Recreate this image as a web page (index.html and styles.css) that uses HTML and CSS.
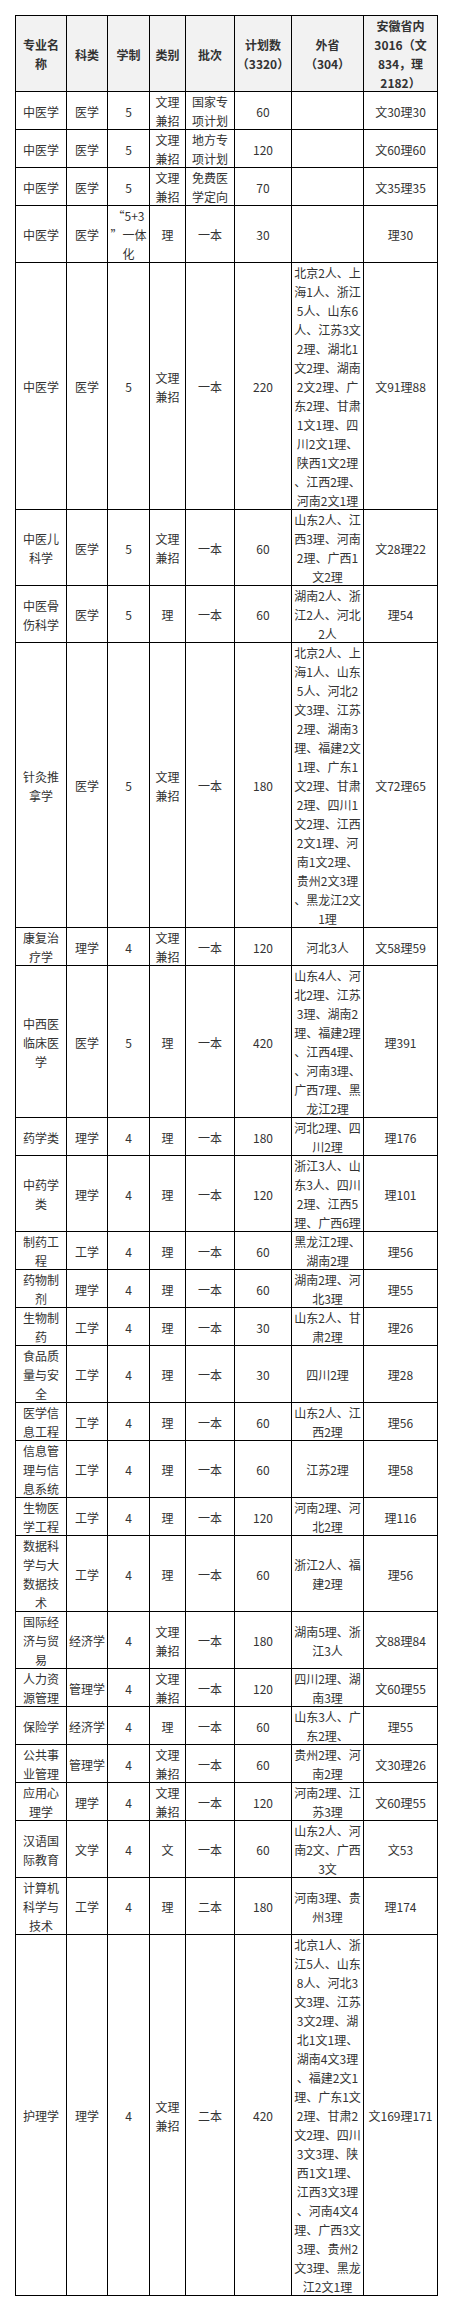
FILE: index.html
```html
<!DOCTYPE html>
<html lang="zh-CN">
<head>
<meta charset="utf-8">
<title>招生计划</title>
<link rel="stylesheet" href="styles.css">
</head>
<body>
<table class="plan">
<colgroup>
<col class="c1"><col class="c2"><col class="c3"><col class="c4"><col class="c5"><col class="c6"><col class="c7"><col class="c8">
</colgroup>
<thead>
<tr class="head">
<th>专业名<br>称</th><th>科类</th><th>学制</th><th>类别</th><th>批次</th><th>计划数<br>（3320）</th><th>外省<br>（304）</th><th>安徽省内<br>3016（文<br>834，理<br>2182）</th>
</tr>
</thead>
<tbody>
<tr><td>中医学</td><td>医学</td><td>5</td><td>文理<br>兼招</td><td>国家专<br>项计划</td><td>60</td><td></td><td>文30理30</td></tr>
<tr><td>中医学</td><td>医学</td><td>5</td><td>文理<br>兼招</td><td>地方专<br>项计划</td><td>120</td><td></td><td>文60理60</td></tr>
<tr><td>中医学</td><td>医学</td><td>5</td><td>文理<br>兼招</td><td>免费医<br>学定向</td><td>70</td><td></td><td>文35理35</td></tr>
<tr><td>中医学</td><td>医学</td><td>“5+3<br>”一体<br>化</td><td>理</td><td>一本</td><td>30</td><td></td><td>理30</td></tr>
<tr><td>中医学</td><td>医学</td><td>5</td><td>文理<br>兼招</td><td>一本</td><td>220</td><td>北京2人、上<br>海1人、浙江<br>5人、山东6<br>人、江苏3文<br>2理、湖北1<br>文2理、湖南<br>2文2理、广<br>东2理、甘肃<br>1文1理、四<br>川2文1理、<br>陕西1文2理<br>、江西2理、<br>河南2文1理</td><td>文91理88</td></tr>
<tr><td>中医儿<br>科学</td><td>医学</td><td>5</td><td>文理<br>兼招</td><td>一本</td><td>60</td><td>山东2人、江<br>西3理、河南<br>2理、广西1<br>文2理</td><td>文28理22</td></tr>
<tr><td>中医骨<br>伤科学</td><td>医学</td><td>5</td><td>理</td><td>一本</td><td>60</td><td>湖南2人、浙<br>江2人、河北<br>2人</td><td>理54</td></tr>
<tr><td>针灸推<br>拿学</td><td>医学</td><td>5</td><td>文理<br>兼招</td><td>一本</td><td>180</td><td>北京2人、上<br>海1人、山东<br>5人、河北2<br>文3理、江苏<br>2理、湖南3<br>理、福建2文<br>1理、广东1<br>文2理、甘肃<br>2理、四川1<br>文2理、江西<br>2文1理、河<br>南1文2理、<br>贵州2文3理<br>、黑龙江2文<br>1理</td><td>文72理65</td></tr>
<tr><td>康复治<br>疗学</td><td>理学</td><td>4</td><td>文理<br>兼招</td><td>一本</td><td>120</td><td>河北3人</td><td>文58理59</td></tr>
<tr><td>中西医<br>临床医<br>学</td><td>医学</td><td>5</td><td>理</td><td>一本</td><td>420</td><td>山东4人、河<br>北2理、江苏<br>3理、湖南2<br>理、福建2理<br>、江西4理、<br>、河南3理、<br>广西7理、黑<br>龙江2理</td><td>理391</td></tr>
<tr><td>药学类</td><td>理学</td><td>4</td><td>理</td><td>一本</td><td>180</td><td>河北2理、四<br>川2理</td><td>理176</td></tr>
<tr><td>中药学<br>类</td><td>理学</td><td>4</td><td>理</td><td>一本</td><td>120</td><td>浙江3人、山<br>东3人、四川<br>2理、江西5<br>理、广西6理</td><td>理101</td></tr>
<tr><td>制药工<br>程</td><td>工学</td><td>4</td><td>理</td><td>一本</td><td>60</td><td>黑龙江2理、<br>湖南2理</td><td>理56</td></tr>
<tr><td>药物制<br>剂</td><td>理学</td><td>4</td><td>理</td><td>一本</td><td>60</td><td>湖南2理、河<br>北3理</td><td>理55</td></tr>
<tr><td>生物制<br>药</td><td>工学</td><td>4</td><td>理</td><td>一本</td><td>30</td><td>山东2人、甘<br>肃2理</td><td>理26</td></tr>
<tr><td>食品质<br>量与安<br>全</td><td>工学</td><td>4</td><td>理</td><td>一本</td><td>30</td><td>四川2理</td><td>理28</td></tr>
<tr><td>医学信<br>息工程</td><td>工学</td><td>4</td><td>理</td><td>一本</td><td>60</td><td>山东2人、江<br>西2理</td><td>理56</td></tr>
<tr><td>信息管<br>理与信<br>息系统</td><td>工学</td><td>4</td><td>理</td><td>一本</td><td>60</td><td>江苏2理</td><td>理58</td></tr>
<tr><td>生物医<br>学工程</td><td>工学</td><td>4</td><td>理</td><td>一本</td><td>120</td><td>河南2理、河<br>北2理</td><td>理116</td></tr>
<tr><td>数据科<br>学与大<br>数据技<br>术</td><td>工学</td><td>4</td><td>理</td><td>一本</td><td>60</td><td>浙江2人、福<br>建2理</td><td>理56</td></tr>
<tr><td>国际经<br>济与贸<br>易</td><td>经济学</td><td>4</td><td>文理<br>兼招</td><td>一本</td><td>180</td><td>湖南5理、浙<br>江3人</td><td>文88理84</td></tr>
<tr><td>人力资<br>源管理</td><td>管理学</td><td>4</td><td>文理<br>兼招</td><td>一本</td><td>120</td><td>四川2理、湖<br>南3理</td><td>文60理55</td></tr>
<tr><td>保险学</td><td>经济学</td><td>4</td><td>理</td><td>一本</td><td>60</td><td>山东3人、广<br>东2理、</td><td>理55</td></tr>
<tr><td>公共事<br>业管理</td><td>管理学</td><td>4</td><td>文理<br>兼招</td><td>一本</td><td>60</td><td>贵州2理、河<br>南2理</td><td>文30理26</td></tr>
<tr><td>应用心<br>理学</td><td>理学</td><td>4</td><td>文理<br>兼招</td><td>一本</td><td>120</td><td>河南2理、江<br>苏3理</td><td>文60理55</td></tr>
<tr><td>汉语国<br>际教育</td><td>文学</td><td>4</td><td>文</td><td>一本</td><td>60</td><td>山东2人、河<br>南2文、广西<br>3文</td><td>文53</td></tr>
<tr><td>计算机<br>科学与<br>技术</td><td>工学</td><td>4</td><td>理</td><td>二本</td><td>180</td><td>河南3理、贵<br>州3理</td><td>理174</td></tr>
<tr><td>护理学</td><td>理学</td><td>4</td><td>文理<br>兼招</td><td>二本</td><td>420</td><td>北京1人、浙<br>江5人、山东<br>8人、河北3<br>文3理、江苏<br>3文2理、湖<br>北1文1理、<br>湖南4文3理<br>、福建2文1<br>理、广东1文<br>2理、甘肃2<br>文2理、四川<br>3文3理、陕<br>西1文1理、<br>江西3文3理<br>、河南4文4<br>理、广西3文<br>3理、贵州2<br>文3理、黑龙<br>江2文1理</td><td>文169理171</td></tr>
</tbody>
</table>
</body>
</html>
```

FILE: styles.css
```css
html, body {
  margin: 0;
  padding: 0;
  background: #ffffff;
}

body {
  padding: 15px;
  font-family: "Noto Sans CJK SC", "Noto Sans", sans-serif;
  font-size: 12px;
  color: #333333;
}

.plan {
  table-layout: fixed;
  width: 423px;
  border-collapse: separate;
  border-spacing: 0;
  border-top: 1px solid #000000;
  border-left: 1px solid #000000;
}

.c1 { width: 51px; }
.c2 { width: 41px; }
.c3 { width: 42px; }
.c4 { width: 36px; }
.c5 { width: 49px; }
.c6 { width: 57px; }
.c7 { width: 72px; }
.c8 { width: 74px; }

.plan th,
.plan td {
  padding: 0 1px 0 0;
  margin: 0;
  line-height: 19px;
  text-align: center;
  vertical-align: middle;
  white-space: nowrap;
  box-shadow: inset -1px -1px 0 #000000;
  font-weight: normal;
}

.plan .head th {
  background: #f2f2f2;
  font-weight: bold;
  color: #333333;
}
```
